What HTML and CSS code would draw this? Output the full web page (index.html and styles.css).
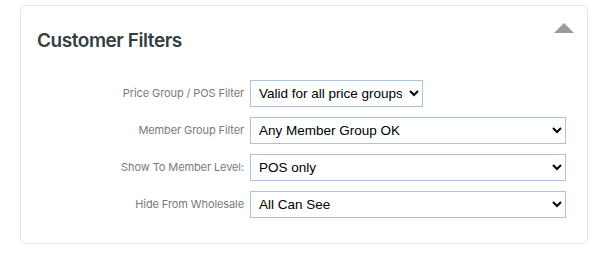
FILE: index.html
```html
<!DOCTYPE html>
<html lang="en">
<head>
  <meta charset="UTF-8" />
  <meta name="viewport" content="width=device-width, initial-scale=1" />
  <title>Customer Filters</title>
  <link rel="stylesheet" href="styles.css">
</head>
<body>
  <div class="card">
    <div class="card-head">
      <h2>Customer Filters</h2>
      <span class="toggle" title="Collapse"></span>
    </div>

    <div class="filters">
      <label for="price_group">Price Group / POS Filter</label>
      <div class="field">
        <select id="price_group" class="short">
          <option>Valid for all price groups</option>
        </select>
      </div>

      <label for="member_group">Member Group Filter</label>
      <div class="field">
        <select id="member_group">
          <option>Any Member Group OK</option>
        </select>
      </div>

      <label for="member_level">Show To Member Level:</label>
      <div class="field">
        <select id="member_level">
          <option>POS only</option>
        </select>
      </div>

      <label for="wholesale">Hide From Wholesale</label>
      <div class="field">
        <select id="wholesale">
          <option>All Can See</option>
        </select>
      </div>
    </div>
  </div>
</body>
</html>
```

FILE: styles.css
```css
body {
  margin: 0;
  padding: 5px 26px 0 20px;
  background-color: #fff;
  font-family: 'Inter', sans-serif;
}

.card {
  border: 1px solid #e4e4e4;
  border-radius: 6px;
  box-sizing: border-box;
  height: 239px;
}

.card-head {
  display: flex;
  justify-content: space-between;
  align-items: flex-start;
  padding: 23px 13px 0 16px;
}

.card-head h2 {
  margin: 0;
  font-size: 19px;
  font-weight: 600;
  color: #34403f;
  letter-spacing: -0.45px;
}

.toggle {
  width: 0;
  height: 0;
  margin-top: -6px;
  border-left: 10px solid transparent;
  border-right: 10px solid transparent;
  border-bottom: 10px solid #9a9a9a;
  cursor: pointer;
}

.filters {
  display: grid;
  grid-template-columns: 223px 1fr;
  column-gap: 6px;
  row-gap: 10px;
  padding: 28px 21px 0 0;
}

.filters label {
  text-align: right;
  font-size: 11px;
  color: #7a7a7a;
  padding-top: 6px;
  letter-spacing: -0.1px;
}

.field select {
  width: 100%;
  height: 27px;
  font-family: 'Liberation Sans', Arial, sans-serif;
  font-size: 13.5px;
  color: #000;
  background-color: #fff;
  border: 1px solid #a9c3df;
  border-radius: 0;
  padding: 0 4px;
}

.field select.short {
  width: 173px;
}
```
